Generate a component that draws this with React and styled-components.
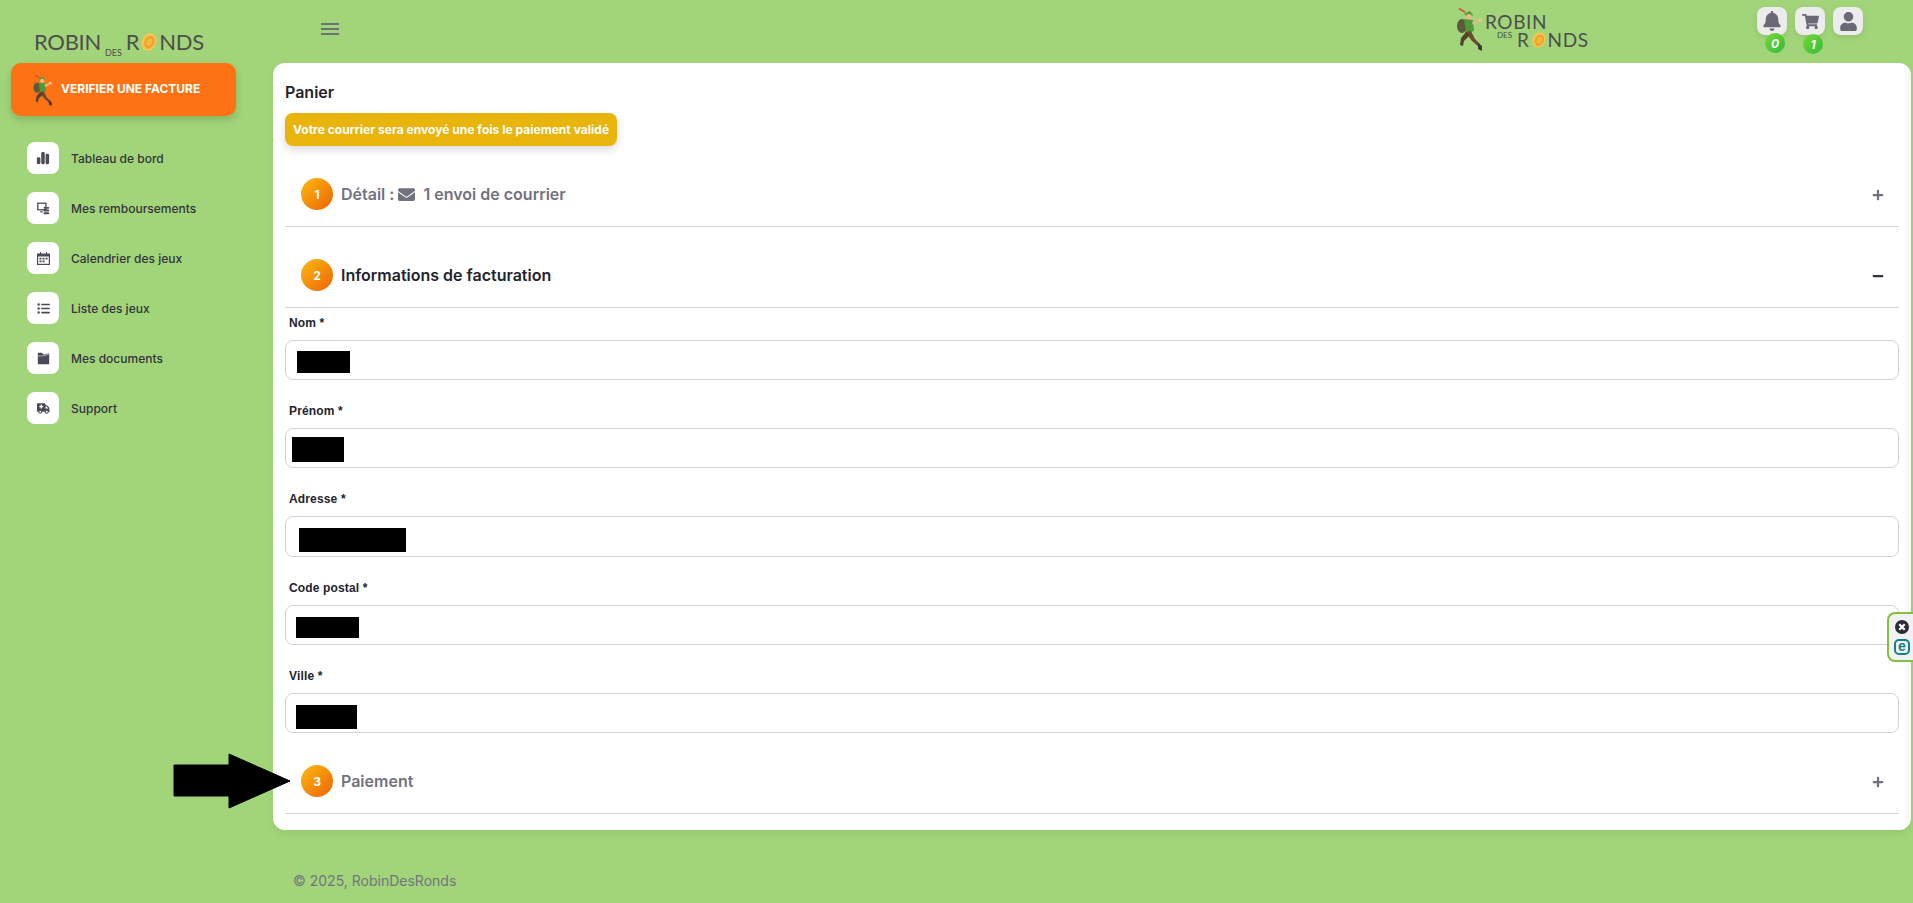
import React from 'react';
import styled, {createGlobalStyle} from 'styled-components';
import {FaBell, FaShoppingCart, FaUser, FaEnvelope, FaPlus, FaMinus} from 'react-icons/fa';
import {FaChartSimple, FaListUl, FaTruckMedical} from 'react-icons/fa6';

const GlobalStyle = createGlobalStyle`
  html, body {
    margin: 0;
    padding: 0;
    height: 100%;
    overflow: hidden;
    background: #a2d579;
    font-family: Inter, "Liberation Sans", sans-serif;
  }
  * { box-sizing: border-box; }
`;

// little running archer used in both logos
const Runner = ({size}) => (
  <RunnerSvg width={size} height={size * 1.5} viewBox="0 0 30 45">
    <path d="M3 3l7 4 1-1-6-4z" fill="#d0543a" />
    <path d="M9 8l6-3 3 4-3 3z" fill="#4f9a35" />
    <circle cx="14" cy="11" r="3" fill="#e9b58c" />
    <ellipse cx="7" cy="20" rx="5" ry="7" fill="#5b5a3c" />
    <path d="M9 13l9 1 1 11-8 2z" fill="#4f9a35" />
    <path d="M17 16l6-2 1 2-6 3z" fill="#e9b58c" />
    <circle cx="25" cy="14" r="2" fill="#e9c58c" />
    <path d="M10 26l6-1 4 8 5 5-1 3-7-6z" fill="#6b4a32" />
    <path d="M11 26l4 3-6 6-1 5-3-1 1-7z" fill="#5a3f2c" />
    <path d="M23 37l4 3v5l-4-2z" fill="#3d3a34" />
  </RunnerSvg>
);

const Coin = ({size}) => (
  <CoinSvg width={size} height={size} viewBox="0 0 20 20">
    <ellipse cx="10" cy="10" rx="8" ry="10" transform="rotate(24 10 10)" fill="#f7c555" />
    <ellipse cx="10.5" cy="10" rx="5.5" ry="7.5" transform="rotate(24 10 10)" fill="#eda32b" />
    <ellipse cx="10.5" cy="10" rx="3" ry="4.5" transform="rotate(24 10 10)" fill="#f5b93f" />
  </CoinSvg>
);

const RefundIcon = () => (
  <svg width="13" height="13" viewBox="0 0 16 16" fill="none" stroke="#4b4b57">
    <rect x="1" y="1.5" width="10" height="8" strokeWidth="1.6" />
    <path d="M4 12h3" strokeWidth="1.6" />
    <rect x="8" y="6" width="7" height="2.4" rx="1" fill="#4b4b57" stroke="none" />
    <rect x="8" y="9.3" width="7" height="2.4" rx="1" fill="#4b4b57" stroke="none" />
    <rect x="8" y="12.6" width="7" height="2.4" rx="1" fill="#4b4b57" stroke="none" />
  </svg>
);

const CalendarIcon = () => (
  <svg width="13" height="13" viewBox="0 0 13 13">
    <path d="M3 0h1v1.5h5V0h1v1.5h3V13H0V1.5h3z" fill="#4b4b57" />
    <rect x="1.2" y="4.5" width="10.6" height="7.3" fill="#fff" />
    <path d="M2.5 5.8h2v1.7h-2zM5.5 5.8h2v1.7h-2zM8.5 5.8h2v1.7h-2zM2.5 8.6h2v1.7h-2zM5.5 8.6h2v1.7h-2z" fill="#4b4b57" />
  </svg>
);

const FolderIcon = () => (
  <svg width="13" height="13" viewBox="0 0 16 16">
    <path d="M1 1h5l2.5 2.5L15 1.5V15H1z" fill="#4b4b57" />
    <path d="M1 5l6.5-.2 7.5-2" stroke="#d8d8d8" strokeWidth="0.8" fill="none" />
  </svg>
);

const NAV_ITEMS = [
  {label: 'Tableau de bord', icon: <FaChartSimple size={14} />},
  {label: 'Mes remboursements', icon: <RefundIcon />},
  {label: 'Calendrier des jeux', icon: <CalendarIcon />},
  {label: 'Liste des jeux', icon: <FaListUl size={13} />},
  {label: 'Mes documents', icon: <FolderIcon />},
  {label: 'Support', icon: <FaTruckMedical size={13} />},
];

const FIELDS = [
  {label: 'Nom *', left: 11, top: 10, width: 53, height: 22, box: 40},
  {label: 'Prénom *', left: 6, top: 8, width: 52, height: 25, box: 40},
  {label: 'Adresse *', left: 13, top: 11, width: 107, height: 24, box: 41},
  {label: 'Code postal *', left: 10, top: 11, width: 63, height: 21, box: 40},
  {label: 'Ville *', left: 10, top: 11, width: 61, height: 24, box: 40},
];

const AccordionHead = ({num, open, children}) => (
  <Head $open={open}>
    <StepCircle>{num}</StepCircle>
    <HeadTitle $open={open}>{children}</HeadTitle>
    <Toggle $open={open}>{open ? <FaMinus size={12} /> : <FaPlus size={12} />}</Toggle>
  </Head>
);

const App = () => {
  return (
    <Page>
      <GlobalStyle />
      <Sidebar>
        <SideLogo>
          <LogoWord>ROBIN</LogoWord>
          <LogoDes>DES</LogoDes>
          <LogoWord>R</LogoWord>
          <Coin size={18} />
          <LogoWord>NDS</LogoWord>
        </SideLogo>
        <CheckButton>
          <Runner size={22} />
          <span>VERIFIER UNE FACTURE</span>
        </CheckButton>
        <Nav>
          {NAV_ITEMS.map((v) => (
            <NavItem key={v.label}>
              <NavIcon>{v.icon}</NavIcon>
              {v.label}
            </NavItem>
          ))}
        </Nav>
      </Sidebar>

      <Main>
        <Topbar>
          <Burger>
            <span /><span /><span />
          </Burger>
          <TopLogo>
            <Runner size={30} />
            <TopLogoText>
              <TopLine>
                <LogoWord $small>ROBIN</LogoWord>
              </TopLine>
              <TopLine $second>
                <TopDes>DES</TopDes>
                <LogoWord $small>R</LogoWord>
                <Coin size={16} />
                <LogoWord $small>NDS</LogoWord>
              </TopLine>
            </TopLogoText>
          </TopLogo>
          <TopActions>
            <TopButton>
              <FaBell size={20} />
              <Badge>0</Badge>
            </TopButton>
            <TopButton>
              <FaShoppingCart size={17} />
              <Badge $low>1</Badge>
            </TopButton>
            <TopButton>
              <FaUser size={19} />
            </TopButton>
          </TopActions>
        </Topbar>

        <Card>
          <CardTitle>Panier</CardTitle>
          <Alert>Votre courrier sera envoyé une fois le paiement validé</Alert>

          <AccordionHead num={1}>
            Détail :<FaEnvelope size={17} /> 1 envoi de courrier
          </AccordionHead>

          <AccordionHead num={2} open>
            Informations de facturation
          </AccordionHead>

          <Form>
            {FIELDS.map((v) => (
              <Field key={v.label}>
                <Label>{v.label}</Label>
                <InputBox $left={v.left} $box={v.box}>
                  <Redacted $top={v.top} $width={v.width} $height={v.height} />
                </InputBox>
              </Field>
            ))}
          </Form>

          <PayHead>
            <AccordionHead num={3}>Paiement</AccordionHead>
            <Arrow width="118" height="56" viewBox="0 0 118 56">
              <path d="M1 12h55V1l61 27-61 27V43H1z" fill="#000" stroke="#000" strokeLinejoin="round" />
            </Arrow>
          </PayHead>
        </Card>

        <Footer>© 2025, RobinDesRonds</Footer>

        <EsetTab>
          <svg width="14" height="14" viewBox="0 0 14 14">
            <circle cx="7" cy="7" r="7" fill="#2b2d3a" />
            <path d="M4.3 4.3l5.4 5.4M9.7 4.3l-5.4 5.4" stroke="#fff" strokeWidth="2.2" />
          </svg>
          <EsetMark>e</EsetMark>
        </EsetTab>
      </Main>
    </Page>
  );
};

const RunnerSvg = styled.svg`
  flex-shrink: 0;
`;

const CoinSvg = styled.svg`
  flex-shrink: 0;
  margin: 0 1px;
`;

const Page = styled.div`
  display: flex;
  width: 1913px;
  height: 903px;
  overflow: hidden;
  background: #a2d579;
`;

const Sidebar = styled.aside`
  width: 273px;
  flex-shrink: 0;
  padding-left: 11px;
`;

const SideLogo = styled.div`
  height: 63px;
  padding: 21px 0 0 23px;
  display: flex;
  align-items: center;
`;

const LogoWord = styled.span`
  display: block;
  font-family: Lato, sans-serif;
  font-size: ${(props) => (props.$small ? '19px' : '22px')};
  line-height: ${(props) => (props.$small ? '18px' : '22px')};
  letter-spacing: ${(props) => (props.$small ? '0.6px' : '-0.3px')};
  font-weight: 400;
  color: #4d4f4d;
`;

const LogoDes = styled.span`
  font-family: Lato, sans-serif;
  font-size: 9px;
  line-height: 14px;
  align-self: flex-end;
  margin: 0 4px 3px 4px;
  color: #4d4f4d;
`;

const TopDes = styled.span`
  font-family: Lato, sans-serif;
  font-size: 8px;
  line-height: 8px;
  align-self: flex-start;
  margin-right: 5px;
  color: #4d4f4d;
`;

const CheckButton = styled.div`
  width: 225px;
  height: 53px;
  display: flex;
  align-items: center;
  gap: 7px;
  padding-left: 21px;
  background: #fd7314;
  border-radius: 10px;
  box-shadow: 0 4px 8px rgba(0, 0, 0, 0.16);
  color: #fff;
  font-size: 12px;
  font-weight: 700;

  span {
    padding-bottom: 3px;
  }
`;

const Nav = styled.nav`
  margin-top: 26px;
  padding-left: 16px;
  display: flex;
  flex-direction: column;
  gap: 18px;
`;

const NavItem = styled.div`
  display: flex;
  align-items: center;
  gap: 12px;
  height: 32px;
  font-size: 12px;
  font-weight: 500;
  color: #33333d;
`;

const NavIcon = styled.div`
  width: 32px;
  height: 32px;
  display: flex;
  align-items: center;
  justify-content: center;
  background: #fff;
  border-radius: 8px;
  color: #4b4b57;
`;

const Main = styled.main`
  flex: 1;
  min-width: 0;
  padding-right: 2px;
  position: relative;
`;

const Topbar = styled.header`
  height: 63px;
  display: flex;
  align-items: flex-start;
  padding-left: 48px;
`;

const Burger = styled.div`
  margin-top: 23px;
  width: 18px;
  display: flex;
  flex-direction: column;
  gap: 3px;

  span {
    display: block;
    height: 2px;
    background: #6f7275;
  }
`;

const TopLogo = styled.div`
  margin: 6px 0 0 1116px;
  width: 302px;
  display: flex;
  align-items: flex-start;
`;

const TopLogoText = styled.div`
  margin-top: 7px;
  display: flex;
  flex-direction: column;
`;

const TopLine = styled.div`
  display: flex;
  align-items: center;
  height: 18px;
  padding-left: ${(props) => (props.$second ? '12px' : '0')};
`;

const TopActions = styled.div`
  margin-top: 7px;
  display: flex;
  gap: 8px;
`;

const TopButton = styled.div`
  position: relative;
  width: 30px;
  height: 28px;
  display: flex;
  align-items: center;
  justify-content: center;
  background: #ececec;
  border-radius: 8px;
  box-shadow: 0 2px 6px rgba(0, 0, 0, 0.1);
  color: #6a6a76;
`;

const Badge = styled.span`
  position: absolute;
  left: 8px;
  top: ${(props) => (props.$low ? '27px' : '26px')};
  width: 20px;
  height: 20px;
  border-radius: 50%;
  display: flex;
  align-items: center;
  justify-content: center;
  background: linear-gradient(135deg, #7bd835, #2fbb3d);
  color: #fff;
  font-size: 12px;
  font-weight: 700;
  font-style: italic;
`;

const Card = styled.section`
  height: 767px;
  padding: 20px 12px 16px;
  background: linear-gradient(90deg, #fff calc(100% - 8px), #f5f5f5);
  border-radius: 12px;
  box-shadow: 0 4px 10px rgba(0, 0, 0, 0.06);
`;

const CardTitle = styled.h1`
  margin: 0 0 12px;
  font-size: 16px;
  line-height: 18px;
  font-weight: 600;
  color: #23232d;
`;

const Alert = styled.div`
  display: inline-flex;
  align-items: center;
  height: 33px;
  padding: 0 8px;
  margin-bottom: 16px;
  background: #e9b40b;
  border-radius: 8px;
  box-shadow: 0 4px 8px rgba(0, 0, 0, 0.14);
  color: #fff;
  font-size: 12px;
  font-weight: 700;
  letter-spacing: 0.03px;
  white-space: nowrap;
`;

const Head = styled.div`
  height: 65px;
  margin-bottom: ${(props) => (props.$open ? '0' : '16px')};
  padding: 0 15px 0 16px;
  display: flex;
  align-items: center;
  gap: 8px;
  border-bottom: 1px solid #d3d3d6;
`;

const StepCircle = styled.div`
  width: 32px;
  height: 32px;
  border-radius: 50%;
  display: flex;
  align-items: center;
  justify-content: center;
  flex-shrink: 0;
  background: linear-gradient(135deg, #fcbb10, #ee6205);
  color: #fff;
  font-size: 12px;
  font-weight: 700;
`;

const HeadTitle = styled.div`
  flex: 1;
  display: flex;
  align-items: center;
  gap: 4px;
  white-space: pre;
  font-size: 16px;
  font-weight: 600;
  color: ${(props) => (props.$open ? '#23232d' : '#72727f')};
`;

const Toggle = styled.div`
  display: flex;
  margin-top: 1px;
  color: ${(props) => (props.$open ? '#33333d' : '#72727f')};
`;

const Form = styled.div`
  padding-top: 7px;
  display: flex;
  flex-direction: column;
  gap: 23px;
  margin-bottom: 16px;
`;

const Field = styled.div`
  display: flex;
  flex-direction: column;
  gap: 10px;
`;

const Label = styled.label`
  padding-left: 4px;
  height: 15px;
  line-height: 16px;
  font-family: "Liberation Sans", sans-serif;
  font-size: 12px;
  font-weight: 700;
  letter-spacing: 0.15px;
  color: #23232d;
`;

const InputBox = styled.div`
  height: ${(props) => props.$box}px;
  padding-left: ${(props) => props.$left}px;
  display: flex;
  align-items: flex-start;
  border: 1px solid #d3d3d6;
  border-radius: 8px;
  background: #fff;
`;

const Redacted = styled.div`
  width: ${(props) => props.$width}px;
  height: ${(props) => props.$height}px;
  margin-top: ${(props) => props.$top}px;
  background: #000;
`;

const PayHead = styled.div`
  position: relative;
`;

const Arrow = styled.svg`
  position: absolute;
  left: -112px;
  top: 4px;
`;

const Footer = styled.footer`
  margin: 42px 0 0 20px;
  font-size: 14px;
  line-height: 18px;
  color: #74747f;
`;

const EsetTab = styled.div`
  position: absolute;
  right: 0;
  top: 612px;
  width: 26px;
  height: 50px;
  padding-left: 2px;
  display: flex;
  flex-direction: column;
  align-items: center;
  justify-content: center;
  gap: 5px;
  background: #f1f1f1;
  border: 2px solid #84c142;
  border-right: 0;
  border-radius: 8px 0 0 8px;
`;

const EsetMark = styled.div`
  width: 16px;
  height: 16px;
  display: flex;
  align-items: center;
  justify-content: center;
  border: 2px solid #12808a;
  border-radius: 5px;
  color: #12808a;
  font-family: "Liberation Sans", sans-serif;
  font-size: 14px;
  line-height: 11px;
  font-weight: 700;
`;

export default App;
